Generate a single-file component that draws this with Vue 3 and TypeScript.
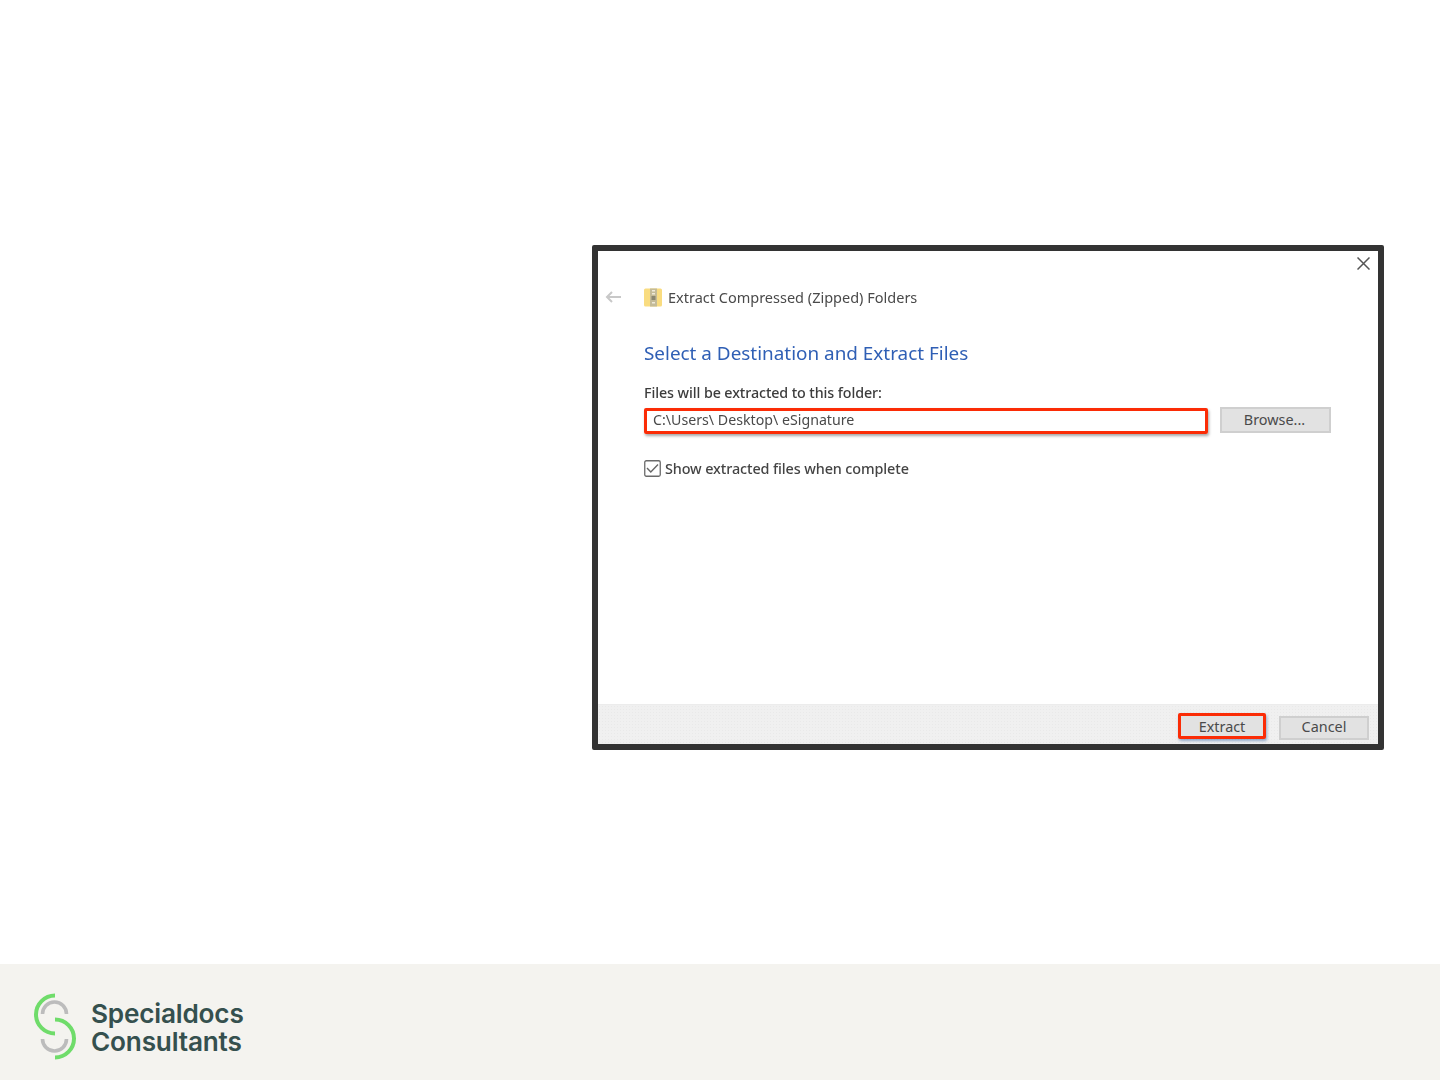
<template>
  <div class="slide">
    <main class="content">
      <div class="shot">
        <div class="close-row">
          <svg class="close-icon" width="13" height="13" viewBox="0 0 13 13">
            <path d="M0.5 0.5 12.5 12.5M12.5 0.5 0.5 12.5" stroke="#555" stroke-width="1.5" fill="none" />
          </svg>
        </div>

        <div class="title-row">
          <svg class="back-icon" width="16" height="12" viewBox="0 0 16 12">
            <path d="M16 6H2M7 1 2 6l5 5" stroke="#c8c8c8" stroke-width="2" fill="none" />
          </svg>
          <svg class="zip-icon" width="18" height="19" viewBox="0 0 18 19">
            <rect x="0" y="0.5" width="18" height="18" rx="1.5" fill="#f9dc80" />
            <rect x="6" y="0.5" width="7" height="18" fill="#c4bb98" />
            <rect x="8" y="2" width="3" height="1.5" fill="#eee9d8" />
            <rect x="8" y="5" width="3" height="1.5" fill="#eee9d8" />
            <rect x="7.5" y="8" width="4" height="4" fill="#8a8670" />
            <rect x="8" y="14" width="3" height="1.5" fill="#eee9d8" />
          </svg>
          <span class="title">{{ title }}</span>
        </div>

        <div class="form">
          <h1 class="heading">{{ heading }}</h1>
          <div class="label">{{ label }}</div>
          <div class="field-row">
            <div class="path-input">
              <span>C:\Users\ Desktop\ eSignature</span>
            </div>
            <div class="btn browse">Browse...</div>
          </div>
          <div class="check-row">
            <svg width="17" height="17" viewBox="0 0 17 17">
              <rect x="0.75" y="0.75" width="15.5" height="15.5" rx="1.5" fill="#fff" stroke="#6a6a6a" stroke-width="1.3" />
              <path d="M3 8 6.8 12 14 4.5" stroke="#666" stroke-width="1.4" fill="none" />
            </svg>
            <span class="check-text">{{ checkLabel }}</span>
          </div>
        </div>

        <div class="actions">
          <div class="btn extract">Extract</div>
          <div class="btn cancel">Cancel</div>
        </div>
      </div>
    </main>

    <footer class="footer">
      <svg class="logo" width="50" height="72" viewBox="30 990 50 72">
        <g fill="none">
          <path d="M42.5 1014A12 12 0 0 1 66.5 1014" stroke="#bcbcbc" stroke-width="3.6" />
          <path d="M42.5 1039A12 12 0 0 0 66.5 1039" stroke="#bcbcbc" stroke-width="3.6" />
          <path d="M55 995.5A19 19 0 0 0 55 1033.5" stroke="#6fdc6a" stroke-width="4" />
          <path d="M55 1019.5A19 19 0 0 1 55 1057.5" stroke="#6fdc6a" stroke-width="4" />
        </g>
      </svg>
      <div class="brand">Specialdocs<br />Consultants</div>
    </footer>
  </div>
</template>

<script setup lang="ts">
const title = 'Extract Compressed (Zipped) Folders'
const heading = 'Select a Destination and Extract Files'
const label = 'Files will be extracted to this folder:'
const checkLabel = 'Show extracted files when complete'
</script>

<style>
html,
body {
  margin: 0;
  background: #fff;
}
</style>

<style scoped>
.slide {
  width: 1440px;
  height: 1080px;
  display: flex;
  flex-direction: column;
  font-family: "Noto Sans", "Open Sans", sans-serif;
  overflow: hidden;
}

.content {
  height: 964px;
  box-sizing: border-box;
  padding: 245px 56px 0 592px;
  background: #fff;
}

.shot {
  height: 505px;
  box-sizing: border-box;
  border: 6px solid #333;
  border-radius: 2px;
  display: flex;
  flex-direction: column;
  background: #fff;
  color: #444;
}

.close-row {
  height: 36px;
  box-sizing: border-box;
  padding: 6px 8px 0 0;
  display: flex;
  justify-content: flex-end;
  align-items: flex-start;
}

.title-row {
  height: 20px;
  display: flex;
  align-items: center;
  padding-left: 7px;
}

.back-icon {
  margin-right: 23px;
  filter: blur(0.4px);
}

.zip-icon {
  margin-right: 6px;
  filter: blur(0.4px);
}

.title {
  font-size: 14.5px;
  line-height: 20px;
  padding-bottom: 1px;
  color: #4a4a4a;
  filter: blur(0.4px);
}

.form {
  flex: 1;
  padding-left: 46px;
  padding-right: 47px;
}

.heading {
  margin: 33px 0 0;
  font-size: 18.9px;
  font-weight: 400;
  line-height: 26px;
  color: #2f5fb5;
  filter: blur(0.4px);
}

.label {
  margin-top: 18px;
  font-size: 14.3px;
  font-weight: 500;
  line-height: 18px;
  color: #3c3c3c;
  filter: blur(0.4px);
  letter-spacing: -0.1px;
}

.field-row {
  margin-top: 5px;
  height: 27px;
  display: flex;
  justify-content: space-between;
}

.path-input {
  width: 564px;
  height: 26px;
  margin-top: 1px;
  box-sizing: border-box;
  border: 3px solid #fb2c06;
  border-radius: 2px;
  padding-left: 6px;
  font-size: 14.2px;
  line-height: 18px;
  color: #4a4a4a;
  box-shadow: 1px 2px 3px rgba(0, 0, 0, 0.35);
}

.path-input span {
  display: inline-block;
  filter: blur(0.4px);
}

.btn {
  box-sizing: border-box;
  display: flex;
  align-items: center;
  justify-content: center;
  background: #e2e2e2;
  border: 2px solid #cfcfcf;
  font-size: 14.4px;
  color: #4a4a4a;
}

.browse {
  width: 111px;
  height: 26px;
  padding-bottom: 2px;
  padding-right: 2px;
}

.check-row {
  margin-top: 24px;
  height: 20px;
  display: flex;
  align-items: center;
  gap: 4px;
  font-size: 14.4px;
  font-weight: 500;
  color: #444;
}

.check-text {
  filter: blur(0.4px);
  letter-spacing: -0.11px;
}

.actions {
  height: 40px;
  box-sizing: border-box;
  padding-right: 9px;
  display: flex;
  justify-content: flex-end;
  align-items: flex-start;
  background-color: #f0f0f0;
  background-image: radial-gradient(#e9e9e9 1px, transparent 1px);
  background-size: 3px 3px;
  border-top: 1px solid #ececec;
}

.extract {
  width: 88px;
  height: 26px;
  margin-top: 8px;
  margin-right: 13px;
  border: 3px solid #fb2c06;
  border-radius: 2px;
  box-shadow: 1px 2px 3px rgba(0, 60, 140, 0.4);
}

.cancel {
  width: 90px;
  height: 24px;
  margin-top: 11px;
  padding-bottom: 3px;
}

.footer {
  height: 116px;
  box-sizing: border-box;
  padding: 26px 0 0 30px;
  display: flex;
  align-items: flex-start;
  background: #f4f3ef;
}

.brand {
  margin-left: 11px;
  margin-top: 10px;
  font-family: Inter, "Noto Sans", sans-serif;
  font-size: 26.2px;
  font-weight: 600;
  line-height: 28px;
  letter-spacing: -0.2px;
  color: #35504e;
}
</style>
